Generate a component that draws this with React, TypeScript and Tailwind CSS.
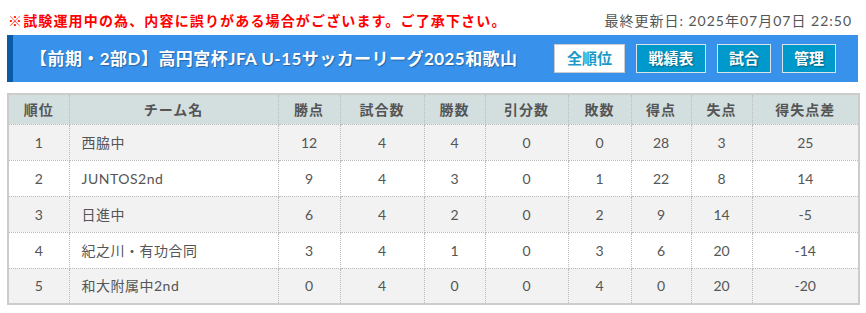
const rows = [
  { rank: 1, team: "西脇中", pts: 12, played: 4, win: 4, draw: 0, lose: 0, gf: 28, ga: 3, gd: "25" },
  { rank: 2, team: "JUNTOS2nd", pts: 9, played: 4, win: 3, draw: 0, lose: 1, gf: 22, ga: 8, gd: "14" },
  { rank: 3, team: "日進中", pts: 6, played: 4, win: 2, draw: 0, lose: 2, gf: 9, ga: 14, gd: "-5" },
  { rank: 4, team: "紀之川・有功合同", pts: 3, played: 4, win: 1, draw: 0, lose: 3, gf: 6, ga: 20, gd: "-14" },
  { rank: 5, team: "和大附属中2nd", pts: 0, played: 4, win: 0, draw: 0, lose: 4, gf: 0, ga: 20, gd: "-20" },
];

const headers = ["順位", "チーム名", "勝点", "試合数", "勝数", "引分数", "敗数", "得点", "失点", "得失点差"];

const font = { fontFamily: 'Lato, "Noto Sans CJK JP", sans-serif' };

export default function App() {
  return (
    <div className="w-[866px] h-[313px] bg-white px-[7px] pt-[8px] overflow-hidden" style={font}>
      {/* 注意書き + 更新日 */}
      <div className="flex items-center justify-between h-[24px] pl-[1px] pr-[7px]">
        <p className="text-[14px] font-bold tracking-[1.15px] text-[#ff0000]">
          ※試験運用中の為、内容に誤りがある場合がございます。ご了承下さい。
        </p>
        <p className="text-[14px] text-[#555] tracking-[1px]">最終更新日: 2025年07月07日 22:50</p>
      </div>

      {/* タイトルバー */}
      <div className="mt-[3px] h-[47px] w-[851px] flex items-center justify-between bg-[#3891eb] border-l-[6px] border-[#0b5aa5] pl-[17px] pr-[22px]">
        <h1 className="text-[17px] font-bold tracking-[0.45px] text-white [text-shadow:1px_1px_1px_rgba(0,0,0,0.3)]">
          【前期・2部D】高円宮杯JFA U-15サッカーリーグ2025和歌山
        </h1>
        <div className="flex gap-[11px]">
          <button className="w-[71px] h-[29px] bg-white border border-[#ccc] text-[#1a9ac9] text-[15px] font-bold">
            全順位
          </button>
          <button className="w-[70px] h-[29px] bg-[#0099cc] border border-[#d8e4ea] text-white text-[15px] font-bold [text-shadow:1px_1px_2px_rgba(0,0,0,0.4)]">
            戦績表
          </button>
          <button className="w-[54px] h-[29px] bg-[#0099cc] border border-[#d8e4ea] text-white text-[15px] font-bold [text-shadow:1px_1px_2px_rgba(0,0,0,0.4)]">
            試合
          </button>
          <button className="w-[54px] h-[29px] bg-[#0099cc] border border-[#d8e4ea] text-white text-[15px] font-bold [text-shadow:1px_1px_2px_rgba(0,0,0,0.4)]">
            管理
          </button>
        </div>
      </div>

      {/* 順位表 */}
      <table className="mt-[11px] w-[851px] table-fixed border-collapse border-2 border-[#ccc] text-[14px] text-[#555]">
        <colgroup>
          <col className="w-[61px]" />
          <col className="w-[209px]" />
          <col className="w-[62px]" />
          <col className="w-[84px]" />
          <col className="w-[61px]" />
          <col className="w-[83px]" />
          <col className="w-[63px]" />
          <col className="w-[60px]" />
          <col className="w-[61px]" />
          <col className="w-[107px]" />
        </colgroup>
        <thead>
          <tr className="h-[30px] bg-[#d3dfdf]">
            {headers.map((h) => (
              <th key={h} className="font-bold text-center border border-dotted border-[#bbb] tracking-[1px]">
                {h}
              </th>
            ))}
          </tr>
        </thead>
        <tbody>
          {rows.map((r, i) => (
            <tr key={r.rank} className={i % 2 === 0 ? "h-[36px] bg-[#f2f2f2]" : "h-[36px] bg-white"}>
              <td className="text-center border border-dotted border-[#bbb]">{r.rank}</td>
              <td className="text-left pl-[12px] border border-dotted border-[#bbb] tracking-[0.5px]">{r.team}</td>
              <td className="text-center border border-dotted border-[#bbb]">{r.pts}</td>
              <td className="text-center border border-dotted border-[#bbb]">{r.played}</td>
              <td className="text-center border border-dotted border-[#bbb]">{r.win}</td>
              <td className="text-center border border-dotted border-[#bbb]">{r.draw}</td>
              <td className="text-center border border-dotted border-[#bbb]">{r.lose}</td>
              <td className="text-center border border-dotted border-[#bbb]">{r.gf}</td>
              <td className="text-center border border-dotted border-[#bbb]">{r.ga}</td>
              <td className="text-center border border-dotted border-[#bbb]">{r.gd}</td>
            </tr>
          ))}
        </tbody>
      </table>
    </div>
  );
}
